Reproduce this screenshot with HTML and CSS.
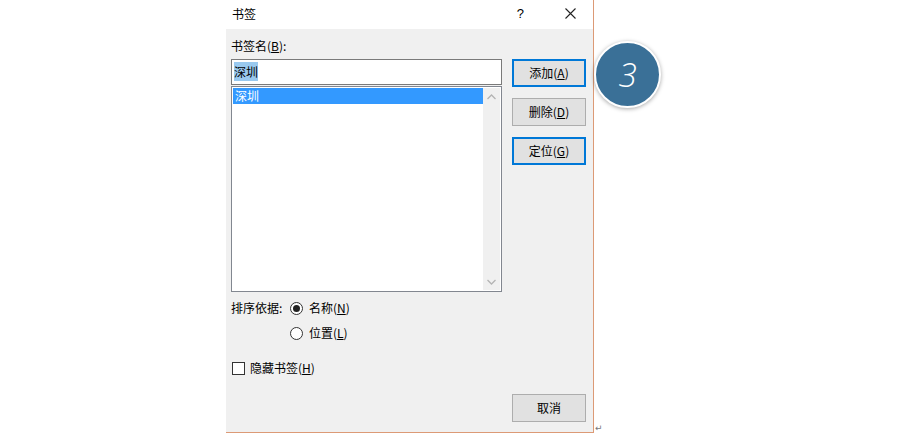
FILE: index.html
```html
<!DOCTYPE html>
<html lang="zh-CN">
<head>
<meta charset="utf-8">
<title>书签</title>
<link rel="stylesheet" href="styles.css">
</head>
<body>
<div class="page">
  <div class="dialog">
    <div class="titlebar">
      <span class="title">书签</span>
      <span class="help">?</span>
      <svg class="close" width="11" height="11" viewBox="0 0 11 11"><path d="M0.5 0.5 L10.5 10.5 M10.5 0.5 L0.5 10.5" stroke="#222" stroke-width="1.1" fill="none"/></svg>
    </div>
    <div class="body">
      <div class="label">书签名(<u>B</u>):</div>
      <div class="main">
        <div class="left">
          <div class="input"><span class="sel">深圳</span></div>
          <div class="list">
            <div class="items">
              <div class="item active">深圳</div>
            </div>
            <div class="scrollbar">
              <svg width="9" height="6" viewBox="0 0 9 6"><path d="M0.5 5 L4.5 1 L8.5 5" stroke="#b4b4b4" stroke-width="1.3" fill="none"/></svg>
              <svg width="9" height="6" viewBox="0 0 9 6"><path d="M0.5 1 L4.5 5 L8.5 1" stroke="#b4b4b4" stroke-width="1.3" fill="none"/></svg>
            </div>
          </div>
        </div>
        <div class="buttons">
          <div class="btn primary">添加(<u>A</u>)</div>
          <div class="btn">删除(<u>D</u>)</div>
          <div class="btn primary">定位(<u>G</u>)</div>
        </div>
      </div>
      <div class="sort">
        <span class="sort-label">排序依据:</span>
        <div class="radios">
          <div class="radio-row"><span class="radio checked"></span><span>名称(<u>N</u>)</span></div>
          <div class="radio-row"><span class="radio"></span><span>位置(<u>L</u>)</span></div>
        </div>
      </div>
      <div class="check-row"><span class="checkbox"></span><span>隐藏书签(<u>H</u>)</span></div>
      <div class="footer">
        <div class="btn">取消</div>
      </div>
    </div>
  </div>
  <span class="para">↵</span>
  <div class="badge">3</div>
</div>
</body>
</html>
```

FILE: styles.css
```css
* { box-sizing: border-box; }
html, body {
  margin: 0;
  padding: 0;
  background: #ffffff;
}
body {
  font-family: "Noto Sans CJK SC", "Noto Sans", sans-serif;
  font-size: 12px;
  color: #000;
  width: 900px;
  height: 436px;
  overflow: hidden;
}
u { text-decoration: underline; text-underline-offset: 1px; }
.page {
  position: relative;
  display: flex;
  align-items: flex-end;
  height: 436px;
  padding-left: 226px;
}
.dialog {
  width: 368px;
  height: 433px;
  align-self: flex-start;
  border-right: 1px solid #dc9a76;
  border-bottom: 1px solid #dc9a76;
  display: flex;
  flex-direction: column;
  background: #f0f0f0;
}
.titlebar {
  height: 29px;
  background: #ffffff;
  display: flex;
  align-items: center;
  padding: 0 0 2px 6px;
  line-height: 16px;
}
.title { flex: 1; }
.help {
  font-family: "Liberation Sans", sans-serif;
  font-size: 13px;
  margin-right: 41px;
}
.close { margin-right: 17px; }
.body {
  flex: 1;
  padding: 9px 7px 0 5px;
}
.label {
  line-height: 16px;
  height: 16px;
  margin-bottom: 5px;
}
.main {
  display: flex;
  gap: 10px;
}
.left {
  width: 271px;
  display: flex;
  flex-direction: column;
}
.input {
  height: 26px;
  background: #fff;
  border: 1px solid #7a7a7a;
  padding: 3px 2px;
  line-height: 18px;
}
.sel {
  background: #99c9ef;
  padding: 1px 0;
}
.list {
  margin-top: 1px;
  height: 206px;
  background: #fff;
  border: 1px solid #828790;
  display: flex;
  padding: 1px;
}
.items { flex: 1; }
.item {
  height: 16px;
  line-height: 16px;
  padding-left: 2px;
}
.item.active {
  background: #3399ff;
  color: #fff;
}
.scrollbar {
  width: 17px;
  background: #f0f0f0;
  display: flex;
  flex-direction: column;
  justify-content: space-between;
  align-items: center;
  padding: 6px 0 5px;
}
.buttons {
  width: 74px;
  display: flex;
  flex-direction: column;
  gap: 11px;
}
.btn {
  width: 74px;
  height: 28px;
  background: #e1e1e1;
  border: 1px solid #adadad;
  display: flex;
  align-items: center;
  justify-content: center;
  line-height: 16px;
}
.btn.primary {
  border: 2px solid #0078d7;
}
.sort {
  display: flex;
  margin-top: 8px;
}
.sort-label {
  width: 59px;
  line-height: 16px;
}
.radios {
  display: flex;
  flex-direction: column;
  gap: 9px;
}
.radio-row, .check-row {
  display: flex;
  align-items: center;
  gap: 6px;
  line-height: 16px;
  height: 16px;
}
.radio {
  width: 13px;
  height: 13px;
  border: 1px solid #333;
  border-radius: 50%;
  background: #fff;
  display: flex;
  align-items: center;
  justify-content: center;
}
.radio.checked::after {
  content: "";
  width: 7px;
  height: 7px;
  border-radius: 50%;
  background: #222;
}
.check-row {
  margin-top: 19px;
  margin-left: 1px;
  gap: 5px;
}
.checkbox {
  width: 13px;
  height: 13px;
  border: 1px solid #333;
  background: #fff;
}
.footer {
  display: flex;
  justify-content: flex-end;
  margin-top: 18px;
}
.para {
  font-family: "DejaVu Sans", sans-serif;
  font-size: 9px;
  color: #777;
  line-height: 10px;
  margin-left: 1px;
  margin-bottom: 3px;
}
.badge {
  position: absolute;
  left: 594px;
  top: 41px;
  width: 67px;
  height: 67px;
  border-radius: 50%;
  background: #3a7097;
  border: 2px solid #fff;
  box-shadow: 0 1px 4px rgba(0,0,0,0.35);
  color: #fff;
  font-family: "Open Sans", sans-serif;
  font-weight: 300;
  font-style: italic;
  font-size: 33px;
  display: flex;
  align-items: center;
  justify-content: center;
  line-height: 1;
}
```
